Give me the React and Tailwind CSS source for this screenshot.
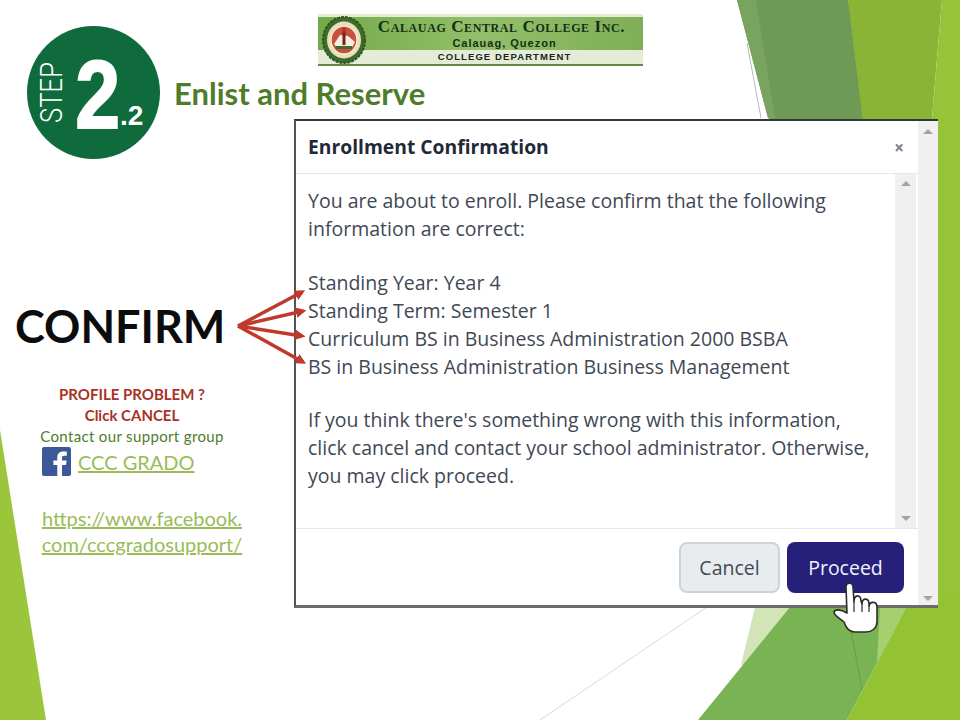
const BACKDROP = (
  <svg className="absolute inset-0" width="960" height="720" viewBox="0 0 960 720">
    <polygon points="0,430 46,720 0,720" fill="#9bc63c" />
    <polygon points="737,0 848,0 880,130 864,180 768,118" fill="#6f9a55" />
    <polygon points="737,0 756,0 775,118 768,118" fill="#78a45f" />
    <polygon points="848,0 942,0 931,130 864,130" fill="#8ab435" />
    <polygon points="942,0 960,0 960,620 900,620 900,400 931,130" fill="#95c43b" />
    <polygon points="755,607 792,607 745,665 741,665" fill="#d3e5b8" />
    <polygon points="698,720 790,607 907,607 877,663 847,720" fill="#79b353" />
    <polygon points="880,607 907,607 877,663" fill="#a6d06f" />
    <polygon points="847,720 877,663 907,607 960,590 960,720" fill="#93c332" />
    <line x1="747" y1="43" x2="761" y2="118" stroke="#9a9a9a" strokeWidth="0.7" />
    <line x1="540" y1="720" x2="707" y2="607" stroke="#d0d0d0" strokeWidth="0.8" />
    <line x1="851" y1="630" x2="862" y2="690" stroke="#5f9440" strokeWidth="0.7" />
  </svg>
);

function Seal() {
  return (
    <svg width="46" height="48" viewBox="0 0 46 48" className="shrink-0">
      <ellipse cx="23" cy="24" rx="21" ry="23" fill="#3f6b2c" strokeDasharray="3 1" stroke="#2f5520" strokeWidth="2" />
      <ellipse cx="23" cy="24" rx="17" ry="18.5" fill="#e9dfb8" />
      <ellipse cx="23" cy="24" rx="13" ry="14" fill="#c8503c" stroke="#f2ecd2" strokeWidth="1.5" />
      <path d="M13 28 L19 19 L27 20 L34 26 L30 33 L17 33 Z" fill="#f4efe0" />
      <rect x="21.5" y="16" width="3" height="13" fill="#7a1f1a" />
      <path d="M23 11 C26 14 25 16 23 17 C21 16 20 14 23 11Z" fill="#b8321f" />
      <rect x="15" y="30" width="16" height="3" fill="#3f6b2c" />
    </svg>
  );
}

function Logo() {
  return (
    <div className="ml-[158px] mt-[14px] w-[325px] h-[52px] relative flex flex-col bg-[#e4ecd8] font-['Liberation_Serif',serif]">
      <div className="h-[33px] mt-[3px] bg-linear-to-r from-[#74a94a] via-[#93bf68] to-[#7fae56] flex flex-col items-center pl-[42px] text-[#123018]">
        <div className="h-[20px] leading-[20px] text-[17px] font-bold tracking-[.6px] [font-variant:small-caps] whitespace-nowrap">
          Calauag Central College Inc.
        </div>
        <div className="h-[13px] leading-[13px] pl-[6px] text-[11px] font-bold tracking-[1px] font-['Liberation_Sans',sans-serif] whitespace-nowrap">
          Calauag, Quezon
        </div>
      </div>
      <div className="h-[14px] leading-[14px] text-[9.5px] font-bold tracking-[1.1px] pl-[48px] text-center text-[#16261a] font-['Liberation_Sans',sans-serif] whitespace-nowrap">
        COLLEGE DEPARTMENT
      </div>
      <div className="h-[2px] bg-[#5d8a45]" />
      <div className="absolute left-[3px] top-[2px]">
        <Seal />
      </div>
    </div>
  );
}

function StepBadge() {
  return (
    <div className="ml-[27px] mt-[26px] w-[133px] h-[133px] shrink-0 rounded-full bg-[#0f6b3c] relative text-white font-['Liberation_Sans',sans-serif]">
      <span className="absolute left-[-6px] top-[50px] w-[61px] h-[33px] flex justify-center text-[32px] leading-[33px] font-['Roboto',sans-serif] font-light -rotate-90 scale-x-[.8]">STEP</span>
      <span className="absolute left-[44px] top-[21px] text-[96px] leading-[96px] font-bold scale-x-[.84] [-webkit-text-stroke:2px_white]">2</span>
      <span className="absolute left-[93px] top-[73px] text-[28px] leading-[34px] font-bold">.2</span>
    </div>
  );
}

function FacebookIcon() {
  return (
    <svg width="29" height="29" viewBox="0 0 29 29" className="shrink-0">
      <rect width="29" height="29" rx="2" fill="#3b5998" />
      <path d="M20 29 V18 H24 L24.6 13.5 H20 V11 C20 9.6 20.5 8.8 22.2 8.8 H24.8 V4.8 C24 4.7 22.8 4.6 21.2 4.6 C17.6 4.6 15.3 6.7 15.3 10.4 V13.5 H11.4 V18 H15.3 V29 Z" fill="#fff" />
    </svg>
  );
}

function Sidebar() {
  return (
    <div className="w-[294px] shrink-0 font-['Lato',sans-serif]">
      <div className="ml-[15px] mt-[177px] h-[60px] leading-[60px] text-[45px] font-bold text-[#0c0c0c] whitespace-nowrap">
        CONFIRM
      </div>
      <div className="mt-[28px] w-[264px] text-center text-[15px] leading-[21px]">
        <div className="font-bold text-[#a93226]">PROFILE PROBLEM ?</div>
        <div className="font-bold text-[#a93226]">Click CANCEL</div>
        <div className="text-[#4f7c2a] tracking-[0.35px]">Contact our support group</div>
      </div>
      <div className="ml-[42px] flex items-center gap-[7px]">
        <FacebookIcon />
        <a className="text-[20px] leading-[26px] text-[#9bbb59] underline">CCC GRADO</a>
      </div>
      <div className="mt-[29px] w-[284px] text-center text-[20px] leading-[26px] text-[#9bbb59] underline">
        <div>https://www.facebook.</div>
        <div>com/cccgradosupport/</div>
      </div>
    </div>
  );
}

function Scrollbar({ className }) {
  return (
    <div className={"flex flex-col justify-between items-center bg-[#f0f0f0] " + className}>
      <div className="w-0 h-0 border-x-[5px] border-x-transparent border-b-[5px] border-b-[#a3a3a3]" />
      <div className="w-0 h-0 border-x-[5px] border-x-transparent border-t-[5px] border-t-[#a3a3a3]" />
    </div>
  );
}

function Dialog() {
  return (
    <div className="w-[644px] h-[489px] flex bg-white border-t-2 border-l-2 border-b-[3px] border-t-[#33393a] border-l-[#555] border-b-[#6b6b6b] font-['Open_Sans',sans-serif] text-[#3f4855]">
      <div className="w-[622px] flex flex-col">
        <div className="h-[53px] shrink-0 flex items-center justify-between pl-[12px] pr-[14px] border-b border-[#e5e7eb]">
          <h2 className="text-[19.3px] font-bold text-[#1f2937]">Enrollment Confirmation</h2>
          <span className="text-[#7b8088] text-[17px] font-bold leading-none">×</span>
        </div>
        <div className="h-[355px] shrink-0 flex border-b border-[#e5e7eb]">
          <div className="w-[599px] pl-[12px] pt-[13px] text-[19.5px] leading-[28px]">
            <p>You are about to enroll. Please confirm that the following<br />information are correct:</p>
            <p className="mt-[26px]">
              Standing Year: Year 4<br />
              Standing Term: Semester 1<br />
              Curriculum BS in Business Administration 2000 BSBA<br />
              BS in Business Administration Business Management
            </p>
            <p className="mt-[25px]">
              If you think there's something wrong with this information,<br />
              click cancel and contact your school administrator. Otherwise,<br />
              you may click proceed.
            </p>
          </div>
          <Scrollbar className="w-[21px] py-[7px]" />
        </div>
        <div className="flex-1 flex justify-end gap-[7px] pt-[13px] pr-[14px]">
          <button className="w-[101px] h-[51px] rounded-lg bg-[#e9ecef] border-2 border-[#cfd3d8] text-[19.5px] text-[#414a57]">Cancel</button>
          <button className="w-[117px] h-[51px] rounded-lg bg-[#26207a] text-[19.5px] text-[#f2f1fa]">Proceed</button>
        </div>
      </div>
      <Scrollbar className="w-[20px] pt-[8px] pb-[4px]" />
    </div>
  );
}

// arrows from CONFIRM to the four profile lines, and the pointer over Proceed
function Overlay() {
  return (
    <svg className="absolute inset-0 pointer-events-none" width="960" height="720" viewBox="0 0 960 720">
      <defs>
        <marker id="tip" markerWidth="4" markerHeight="4" refX="2" refY="1.5" orient="auto">
          <path d="M0 0 L3 1.5 L0 3 Z" fill="#c0392b" />
        </marker>
      </defs>
      <g stroke="#c0392b" strokeWidth="3.5" fill="none">
        <line x1="238" y1="326" x2="302" y2="292" markerEnd="url(#tip)" />
        <line x1="238" y1="326" x2="303" y2="311" markerEnd="url(#tip)" />
        <line x1="238" y1="326" x2="302" y2="336" markerEnd="url(#tip)" />
        <line x1="238" y1="326" x2="303" y2="362" markerEnd="url(#tip)" />
      </g>
      <path
        d="M846 587 C846 582 853 582 853 587 L854 602 C854 594 861 594 861 601 L862 604 C862 597 869 598 869 604 L869 606 C870 601 877 601 877 607 L877 622 C877 628 872 632 866 632 L855 632 C850 632 846 628 844 622 C841 619 834 616 834 612 C835 609 840 609 847 613 Z"
        fill="#fff"
        stroke="#2c2c2c"
        strokeWidth="1.6"
        strokeLinejoin="round"
      />
      <path d="M854 602 L854 612 M862 604 L862 612 M869 606 L869 612" stroke="#2c2c2c" strokeWidth="1.2" />
    </svg>
  );
}

export default function App() {
  return (
    <div className="relative w-[960px] h-[720px] overflow-hidden bg-white">
      {BACKDROP}
      <div className="relative h-[119px] flex">
        <StepBadge />
        <div className="relative">
          <Logo />
          <div className="ml-[14px] mt-[10px] h-[34px] leading-[34px] text-[31px] font-bold text-[#4f7c2a] font-['Lato',sans-serif] whitespace-nowrap">
            Enlist and Reserve
          </div>
        </div>
      </div>
      <div className="relative flex">
        <Sidebar />
        <Dialog />
      </div>
      <Overlay />
    </div>
  );
}
